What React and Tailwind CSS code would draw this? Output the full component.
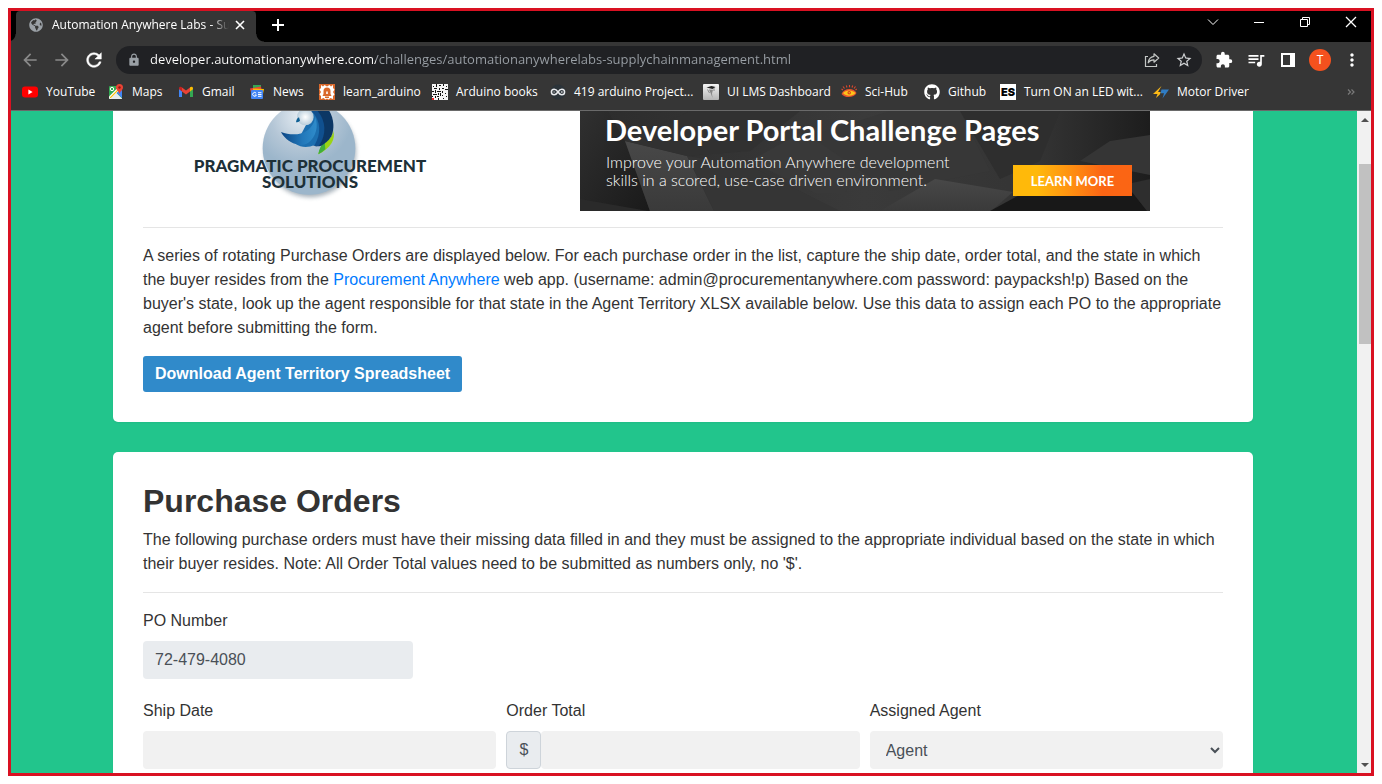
import React from "react";
import {
  MdArrowBack,
  MdArrowForward,
  MdRefresh,
  MdLock,
  MdStarOutline,
  MdExtension,
  MdQueueMusic,
  MdMoreVert,
} from "react-icons/md";
import { FaGlobeAmericas, FaGithub } from "react-icons/fa";

const YouTubeIcon = () => (
  <svg viewBox="0 0 16 16" className="size-4">
    <rect x="0" y="2.5" width="16" height="11" rx="3" fill="#f00" />
    <path d="M6.4 5.6v4.8L10.6 8z" fill="#fff" />
  </svg>
);

const MapsIcon = () => (
  <svg viewBox="0 0 16 16" className="size-4">
    <rect x="1" y="2" width="13" height="13" rx="1" fill="#34a853" />
    <path d="M1.5 15 8 8.500l6 6V15z" fill="#e8eaed" />
    <path d="M8.200 8.200 14 14V6z" fill="#4285f4" />
    <path d="M1 12.500 11.500 2H14v1.500L2.500 15H2a1 1 0 0 1-1-1z" fill="#fff" />
    <path d="M2.200 13.800 12 4" stroke="#fbbc04" strokeWidth="1.200" />
    <circle cx="4" cy="5" r="1.700" fill="none" stroke="#fff" strokeWidth="1" />
    <path d="M11.500 0a3.500 3.500 0 0 0-3.500 3.500C8 6 10.500 6.500 11.500 10c1-3.500 3.500-4 3.500-6.500A3.500 3.500 0 0 0 11.500 0z" fill="#ea4335" />
    <circle cx="11.500" cy="3.500" r="1.200" fill="#8c1a11" />
  </svg>
);

const GmailIcon = () => (
  <svg viewBox="0 0 16 16" className="size-4">
    <path d="M1 4.500v8.500h3V7z" fill="#4285f4" />
    <path d="M15 4.500v8.500h-3V7z" fill="#34a853" />
    <path d="M4 3.500v4l4 3 4-3v-4L8 6.500z" fill="#ea4335" />
    <path d="M1 5.300V4.200C1 2.700 2.700 2.200 4 3.300v4.200z" fill="#c5221f" />
    <path d="M15 5.300V4.200c0-1.500-1.700-2-3-.9v4.200z" fill="#fbbc04" />
  </svg>
);

const NewsIcon = () => (
  <svg viewBox="0 0 16 16" className="size-4">
    <path d="M4 1h8v5H4z" fill="#34a853" />
    <path d="M1 4.500l11-2 .5 3L2 8.500z" fill="#ea4335" />
    <path d="M4 4.500l11 .5-1 5H4z" fill="#fbbc04" />
    <rect x="2" y="6" width="12" height="9" rx="1" fill="#4285f4" />
    <path d="M7.200 9.300A1.900 1.900 0 1 0 7.400 11H5.700M9 8.700h3.500M9 10.500h3.500M9 12.300h3.500" fill="none" stroke="#fff" strokeWidth="1" />
  </svg>
);

const LearnIcon = () => (
  <svg viewBox="0 0 16 16" className="size-4">
    <rect width="16" height="16" fill="#d9682b" />
    <path d="M2 1l2 1.500L5.500 1 8 2.500 10.500 1 12 2.500 14 1v3l1.500 1.500L14 8l1.500 2.500L14 12v3l-2.500-1-2 1.500L8 14.500 6.500 15.500 4.500 14 2 15v-3L.5 10.500 2 8 .5 5.500 2 4z" fill="#fff" />
    <path d="M4.500 10V7a3.500 3.500 0 0 1 7 0v3l1 2h-9z" fill="#d9682b" />
    <path d="M7.200 7.500h1.600v2.500H7.200z" fill="#fff" />
    <path d="M6 12.500h4v1.500H6z" fill="#d9682b" />
  </svg>
);

const BooksIcon = () => (
  <svg viewBox="0 0 16 16" className="size-4">
    <rect width="16" height="16" fill="#f4f4f4" />
    <path
      d="M1 2h1v1H1zM4 0h1v3H4zM7 1h2v1H7zM11 0h1v2h-1zM14 2h1v1h-1zM2 4h3v1H2zM7 4h1v2H7zM10 4h2v1h-2zM13 5h3v1h-3zM0 7h2v1H0zM3 6h1v3H3zM5 7h4v1H5zM10 7h1v2h-1zM6 9h1v2H6zM8 9h1v3H8zM1 10h4v1H1zM3 12h1v2H3zM5 12h2v1H5zM10 11h1v1h-1zM13 9h1v1h-1zM14 12h1v1h-1zM11 14h1v1h-1zM6 14h1v2H6zM0 12h1v1H0z"
      fill="#111"
    />
    <rect x="0" y="14" width="2" height="2" fill="#e22" />
  </svg>
);

const InfinityIcon = () => (
  <svg viewBox="0 0 16 16" className="size-4">
    <circle cx="8" cy="8" r="7.500" fill="#2b3339" />
    <path d="M8 8C6.800 6.200 5.700 5.200 4.200 5.200a2.800 2.800 0 0 0 0 5.600C5.700 10.800 6.800 9.800 8 8s2.300-2.800 3.800-2.800a2.800 2.800 0 0 1 0 5.600C10.300 10.800 9.200 9.800 8 8z" fill="none" stroke="#e8eaed" strokeWidth="1.500" />
    <path d="M3.300 8h1.800M10.900 8h1.800M11.800 7.100v1.800" stroke="#e8eaed" strokeWidth=".7" />
  </svg>
);

const LmsIcon = () => (
  <svg viewBox="0 0 16 16" className="size-4">
    <defs>
      <linearGradient id="lms" x1="0" y1="0" x2="0" y2="1">
        <stop offset="0" stopColor="#f4f4f4" />
        <stop offset="1" stopColor="#b5b5b5" />
      </linearGradient>
    </defs>
    <rect width="16" height="16" rx="1" fill="url(#lms)" />
    <path d="M3.500 3.500 8.500 2l4 1-3 2z" fill="#222" />
    <path d="M6 5.500l4 .3-1 3.700.5 4.500L8 10z" fill="#888" />
    <path d="M4.500 5.500l2 3.500M11 4v3" stroke="#666" strokeWidth=".7" />
  </svg>
);

const SciHubIcon = () => (
  <svg viewBox="0 0 16 16" className="size-4">
    <path d="M3.500 4.500 2 2.500M6 3.500l-.7-2M8.500 3.200V1M11 3.500l.7-2M13 4.500l1.500-2M2 6 .5 5M14.500 6l1.200-1" stroke="#e0482c" strokeWidth="1.100" />
    <path d="M.5 10C3 3.500 13 3.500 15.500 9c-2 5-12 5.500-15 1z" fill="#e8552c" />
    <path d="M2 9C4.500 5.500 11.500 5.500 14.500 9c-3 3.500-9.500 3.500-12.500 0z" fill="#fcc419" />
    <circle cx="8.200" cy="8.800" r="1.700" fill="#d8391c" />
    <circle cx="8.200" cy="8.800" r=".7" fill="#fcc419" />
  </svg>
);

const EsIcon = () => (
  <span className="flex size-4 items-center justify-center overflow-hidden bg-white font-['Inter',sans-serif] text-[11px] leading-none font-black text-black">
    ES
  </span>
);

const MotorIcon = () => (
  <svg viewBox="0 0 16 16" className="size-4">
    <path d="M8.500 2 0 10h4.500L3 14l3.800-3.500 1-2.500H5z" fill="#fbb917" />
    <path d="M8.500 5.500H16L9.500 14.500l1.500-5.300H7.500z" fill="#2f7cc4" />
  </svg>
);

const bookmarks = [
  { label: "YouTube", icon: <YouTubeIcon />, width: "w-[70px]" },
  { label: "Maps", icon: <MapsIcon />, width: "w-[54px]" },
  { label: "Gmail", icon: <GmailIcon />, width: "w-[55px]" },
  { label: "News", icon: <NewsIcon />, width: "w-[54px]" },
  { label: "learn_arduino", icon: <LearnIcon />, width: "w-[97px]" },
  { label: "Arduino books", icon: <BooksIcon />, width: "w-[102px]" },
  { label: "419 arduino Project...", icon: <InfinityIcon />, width: "w-[137px]" },
  { label: "UI LMS Dashboard", icon: <LmsIcon />, width: "w-[122px]" },
  { label: "Sci-Hub", icon: <SciHubIcon />, width: "w-[67px]" },
  { label: "Github", icon: <FaGithub className="size-4 text-white" />, width: "w-[60px]" },
  { label: "Turn ON an LED wit...", icon: <EsIcon />, width: "w-[137px]" },
  { label: "Motor Driver", icon: <MotorIcon />, width: "w-[96px]" },
];

const ToolButton = ({ label, children }) => (
  <button aria-label={label} className="flex h-7 w-8 shrink-0 items-center justify-center text-white">
    {children}
  </button>
);

const WindowButton = ({ label, children }) => (
  <button aria-label={label} className="flex h-[22px] w-10 items-center justify-center text-white">
    <svg viewBox="0 0 12 12" className="size-3" fill="none" stroke="currentColor" strokeWidth="1">
      {children}
    </svg>
  </button>
);

function TabStrip() {
  return (
    <div className="flex h-[31px] bg-black">
      <div className="w-[5px] bg-[radial-gradient(circle_at_-3px_0,transparent_7px,#363636_8px)] bg-[length:5px_8px] bg-bottom bg-no-repeat" />
      <div className="flex h-full w-60 items-start rounded-t bg-[#363636]">
        <div className="flex h-7 w-full items-center pr-2 pl-[13px]">
          <FaGlobeAmericas className="size-3.5 shrink-0 text-[#9aa0a6]" />
          <span className="ml-[9px] w-[177px] overflow-hidden mask-r-from-90% mask-r-to-100% text-xs whitespace-nowrap text-white">
            Automation Anywhere Labs - Sup
          </span>
          <button aria-label="Close tab" className="ml-auto flex size-4 items-center justify-center text-white">
            <svg viewBox="0 0 10 10" className="size-2.5" stroke="currentColor" strokeWidth="1.600">
              <path d="M1 1l8 8M9 1 1 9" />
            </svg>
          </button>
        </div>
      </div>
      <div className="w-2 bg-[radial-gradient(circle_at_8px_0,transparent_7px,#363636_8px)] bg-[length:8px_8px] bg-bottom bg-no-repeat" />
      <button aria-label="New tab" className="flex h-7 w-7 items-center justify-center text-white">
        <svg viewBox="0 0 12 12" className="size-3" stroke="currentColor" strokeWidth="2">
          <path d="M6 0v12M0 6h12" />
        </svg>
      </button>
      <div className="ml-auto flex gap-1.5">
        <WindowButton label="Search tabs">
          <path d="M1 3.500l5 5 5-5" />
        </WindowButton>
        <WindowButton label="Minimize">
          <path d="M1 6.500h10" />
        </WindowButton>
        <WindowButton label="Restore">
          <path d="M1.500 3.500h7v7h-7zM3.500 3.500v-2h7v7h-2" />
        </WindowButton>
        <WindowButton label="Close">
          <path d="M1 1l10 10M11 1 1 11" strokeWidth="1.300" />
        </WindowButton>
      </div>
    </div>
  );
}

function Toolbar() {
  return (
    <div className="flex h-9 items-center bg-[#363636] px-[3px]">
      <ToolButton label="Back">
        <MdArrowBack className="size-5 text-[#8a8a8a]" />
      </ToolButton>
      <ToolButton label="Forward">
        <MdArrowForward className="size-5 text-[#8a8a8a]" />
      </ToolButton>
      <ToolButton label="Reload">
        <MdRefresh className="size-[22px] [&>path:last-child]:stroke-white [&>path:last-child]:stroke-[0.5]" />
      </ToolButton>
      <div className="mx-1.5 flex h-7 min-w-0 flex-1 items-center rounded-full bg-[#202124] pl-[11px]">
        <MdLock className="size-3.5 shrink-0 text-[#9aa0a6]" />
        <input
          aria-label="Address"
          spellCheck={false}
          defaultValue="developer.automationanywhere.com/challenges/automationanywherelabs-supplychainmanagement.html"
          className="ml-[9px] min-w-0 flex-1 bg-[linear-gradient(90deg,#ffffff_226px,#9aa0a6_226px)] bg-clip-text text-[13px] text-transparent outline-none"
        />
        <ToolButton label="Share">
          <svg viewBox="0 0 16 16" className="size-4" fill="none" stroke="#c4c7c5" strokeWidth="1.200">
            <path d="M4 4.500H1.500v10h11V12" />
            <path d="M10 1.800 14.700 6 10 10.200V7.800C7.500 7.700 5.500 8.700 4.200 10.800 4.500 7.300 6.500 4.800 10 4.300z" strokeLinejoin="round" />
          </svg>
        </ToolButton>
        <ToolButton label="Bookmark this tab">
          <MdStarOutline className="size-[18px] text-[#d0d2d4]" />
        </ToolButton>
        <span className="w-0.5" />
      </div>
      <ToolButton label="Extensions">
        <MdExtension className="size-[18px]" />
      </ToolButton>
      <ToolButton label="Media controls">
        <MdQueueMusic className="size-5" />
      </ToolButton>
      <ToolButton label="Side panel">
        <svg viewBox="0 0 14 14" className="size-3.5">
          <path d="M0 0h14v14H0zM2 2v10h7V2z" fill="currentColor" fillRule="evenodd" />
        </svg>
      </ToolButton>
      <ToolButton label="Profile">
        <span className="flex size-[22px] items-center justify-center rounded-full bg-[#f4511e] text-xs">T</span>
      </ToolButton>
      <ToolButton label="Menu">
        <MdMoreVert className="size-5" />
      </ToolButton>
    </div>
  );
}

function BookmarkBar() {
  return (
    <nav className="flex h-[33px] items-center gap-4 border-b border-[#6a6a6a] bg-[#363636] pr-4 pb-1 pl-[11px] text-xs text-white">
      {bookmarks.map((b) => (
        <a key={b.label} href="#" className={`flex shrink-0 items-center gap-2 whitespace-nowrap ${b.width}`}>
          <span className="shrink-0">{b.icon}</span>
          {b.label}
        </a>
      ))}
      <button aria-label="More bookmarks" className="ml-auto text-[#7a7a7a]">
        <svg viewBox="0 0 8 6" className="h-1.5 w-2" fill="none" stroke="currentColor" strokeWidth="1.200">
          <path d="M1 .5 3.500 3 1 5.500M4.500 .5 7 3 4.500 5.500" />
        </svg>
      </button>
    </nav>
  );
}

function Logo() {
  return (
    <div className="relative ml-[37px] h-[100px] w-[260px] shrink-0 overflow-hidden">
      <svg viewBox="0 18 780 300" className="h-[100px] w-[260px]">
        <defs>
          <radialGradient id="disc" cx=".42" cy=".15" r=".55">
            <stop offset="0" stopColor="#e6edf3" />
            <stop offset=".6" stopColor="#b4c6d6" />
            <stop offset="1" stopColor="#9cb6cb" />
          </radialGradient>
          <radialGradient id="head" cx=".5" cy=".5" r=".5">
            <stop offset="0" stopColor="#fff" />
            <stop offset="1" stopColor="#b9cddb" />
          </radialGradient>
          <linearGradient id="wing" x1="0" y1="0" x2="1" y2="0">
            <stop offset="0" stopColor="#0c4584" />
            <stop offset=".6" stopColor="#2278ba" />
            <stop offset="1" stopColor="#2f8ccb" />
          </linearGradient>
          <filter id="soft" x="-20%" y="-20%" width="140%" height="140%">
            <feGaussianBlur stdDeviation="6" />
          </filter>
        </defs>
        <circle cx="391" cy="140" r="137" fill="#6d7f8d" opacity=".6" filter="url(#soft)" />
        <circle cx="387" cy="130" r="139" fill="url(#disc)" />
        <path d="M459 76c2 28-38 38-44 72 36-18 54-44 44-72z" fill="#9bd414" />
        <path d="M434 108c-10 10-17 24-19 40 8-4 15-9 21-15z" fill="#3fae3c" />
        <path d="M393 18h55c14 24 16 54 6 76-8 14-20 22-30 28-6 2-14 3-20 1z" fill="#0c3765" />
        <path d="M393 18h20c24 28 28 70 4 104-6 2-12 2-18-1z" fill="#10508f" />
        <path d="M398 22c24 26 26 64 6 98-18 8-42 8-56-3z" fill="#1c6fb0" />
        <path d="M303 81c26 10 58 10 78-4 16-12 24-28 24-42 12 28 2 62-20 78-12 8-26 8-38 4-20-6-36-20-44-36z" fill="url(#wing)" />
        <circle cx="376" cy="36" r="25" fill="url(#head)" />
        <path d="M348 52c1-8 4-13 9-15l3 10c-3 4-8 4-12 5z" fill="#0d5f94" />
      </svg>
      <p className="absolute inset-x-0 top-[47px] text-center font-['Lato',sans-serif] text-[17px] leading-4 font-black text-[#1d3038]">
        PRAGMATIC PROCUREMENT
        <br />
        SOLUTIONS
      </p>
    </div>
  );
}

function Banner() {
  return (
    <div className="relative h-[100px] w-[570px] shrink-0 overflow-hidden bg-[#333] font-['Lato',sans-serif] text-white">
      <svg viewBox="0 0 570 100" className="absolute inset-0 size-full" preserveAspectRatio="none">
        <defs>
          <linearGradient id="bg" x1="0" y1="0" x2="1" y2="0">
            <stop offset="0" stopColor="#2c2c2c" />
            <stop offset=".5" stopColor="#3a3a3a" />
            <stop offset=".8" stopColor="#343434" />
            <stop offset="1" stopColor="#1d1d1d" />
          </linearGradient>
          <linearGradient id="dark" x1="0" y1="0" x2="1" y2="1">
            <stop offset="0" stopColor="#303030" />
            <stop offset="1" stopColor="#1a1a1a" />
          </linearGradient>
          <linearGradient id="lift" x1="0" y1="0" x2="0" y2="1">
            <stop offset="0" stopColor="#484848" />
            <stop offset="1" stopColor="#3a3a3a" />
          </linearGradient>
        </defs>
        <rect width="570" height="100" fill="url(#bg)" />
        <path d="M0 0h28l17 30 25 70H0z" fill="url(#dark)" />
        <path d="M0 88l68 12H0z" fill="#2a2a2a" />
        <path d="M45 30l62 15 27 55H70z" fill="url(#lift)" />
        <path d="M45 30 110 0h110l-50 40-63 5z" fill="#313131" />
        <path d="M107 45l63 10 90 45H134z" fill="#353535" />
        <path d="M170 50l50-28 70 20-25 40h-30z" fill="#393939" />
        <path d="M230 25 310 0h70l30 60-100 20z" fill="#373737" />
        <path d="M355 68l78 13-22 19H300z" fill="url(#lift)" />
        <path d="M380 0h100l-20 50-40 18z" fill="#2e2e2e" />
        <path d="M500 50l30-20 40-6v40z" fill="#353535" />
        <path d="M410 100l35-19h107l15 19z" fill="#181818" />
        <path d="M552 72l18-4v32h-3l-15-19z" fill="#2e2e2e" />
      </svg>
      <h2 className="absolute top-[3px] left-[25px] text-[29px] leading-8 font-bold whitespace-nowrap">
        Developer Portal Challenge Pages
      </h2>
      <p className="absolute top-[42px] left-[26px] text-base leading-[18px] font-light whitespace-nowrap">
        Improve your Automation Anywhere development
        <br />
        skills in a scored, use-case driven environment.
      </p>
      <button className="absolute right-[18px] bottom-[15px] h-[31px] w-[119px] bg-linear-to-r from-[#ffb90a] from-20% to-[#fb6514] to-75% text-[13px] font-bold">
        LEARN MORE
      </button>
    </div>
  );
}

const field = "block h-[38px] w-full rounded bg-[#f1f1f1] px-3 text-[#495057]";

function Page() {
  return (
    <main className="min-w-0 flex-1 overflow-hidden bg-[#22c58c] pr-0.5 font-['Liberation_Sans',Arial,sans-serif] text-base leading-6 text-[#333]">
      <div className="mx-auto max-w-[1140px]">
        <section className="rounded-b-[5px] bg-white px-[30px] pb-[30px] shadow-xs">
          <div className="flex gap-[140px]">
            <Logo />
            <Banner />
          </div>
          <hr className="my-4 border-[#e5e5e5]" />
          <p>
            A series of rotating Purchase Orders are displayed below. For each purchase order in the list, capture the
            ship date, order total, and the state in which the buyer resides from the{" "}
            <a href="#" className="text-[#007bff]">
              Procurement Anywhere
            </a>{" "}
            web app. (username: admin@procurementanywhere.com password: paypacksh!p) Based on the buyer's state, look up
            the agent responsible for that state in the Agent Territory XLSX available below. Use this data to assign
            each PO to the appropriate agent before submitting the form.
          </p>
          <a href="#" className="mt-4 inline-flex h-9 items-center rounded-[3px] bg-[#308aca] px-3 font-bold text-white">
            Download Agent Territory Spreadsheet
          </a>
        </section>

        <section className="mt-[30px] rounded-[5px] bg-white p-[30px] shadow-xs">
          <h1 className="mb-2 text-[32px] leading-[38px] font-bold">Purchase Orders</h1>
          <p>
            The following purchase orders must have their missing data filled in and they must be assigned to the
            appropriate individual based on the state in which their buyer resides. Note: All Order Total values need to
            be submitted as numbers only, no '$'.
          </p>
          <hr className="my-4 border-[#e5e5e5]" />
          <form>
            <div className="w-1/4">
              <label htmlFor="po" className="mb-2 block">
                PO Number
              </label>
              <input id="po" readOnly value="72-479-4080" className="block h-[38px] w-full rounded bg-[#e9ecef] px-3 text-[#495057]" />
            </div>
            <div className="mt-5 grid grid-cols-3 gap-2.5">
              <div>
                <label htmlFor="ship" className="mb-2 block">
                  Ship Date
                </label>
                <input id="ship" className={field} />
              </div>
              <div>
                <label htmlFor="total" className="mb-2 block">
                  Order Total
                </label>
                <div className="flex">
                  <span className="flex h-[38px] w-[35px] shrink-0 items-center justify-center rounded border border-[#ced4da] bg-[#e9ecef] text-[#495057]">
                    $
                  </span>
                  <input id="total" className={field} />
                </div>
              </div>
              <div>
                <label htmlFor="agent" className="mb-2 block">
                  Assigned Agent
                </label>
                <select id="agent" className={field}>
                  <option>Agent</option>
                </select>
              </div>
            </div>
          </form>
        </section>
      </div>
    </main>
  );
}

function Scrollbar() {
  return (
    <div className="flex w-3.5 shrink-0 flex-col items-end bg-[#f1f1f1]">
      <svg viewBox="0 0 14 18" className="h-[18px] w-3.5">
        <path d="M4 11h8L8 7z" fill="#505050" />
      </svg>
      <div className="mt-[35px] h-[180px] w-3 bg-[#c1c1c1]" />
      <svg viewBox="0 0 14 18" className="mt-auto h-[18px] w-3.5">
        <path d="M4 8h8l-4 4z" fill="#505050" />
      </svg>
    </div>
  );
}

export default function App() {
  return (
    <div className="h-screen bg-white p-2 font-['Open_Sans','Noto_Sans',sans-serif]">
      <div className="flex h-full flex-col overflow-hidden border-[3px] border-[#d91122]">
        <TabStrip />
        <Toolbar />
        <BookmarkBar />
        <div className="flex min-h-0 flex-1">
          <Page />
          <Scrollbar />
        </div>
      </div>
    </div>
  );
}
